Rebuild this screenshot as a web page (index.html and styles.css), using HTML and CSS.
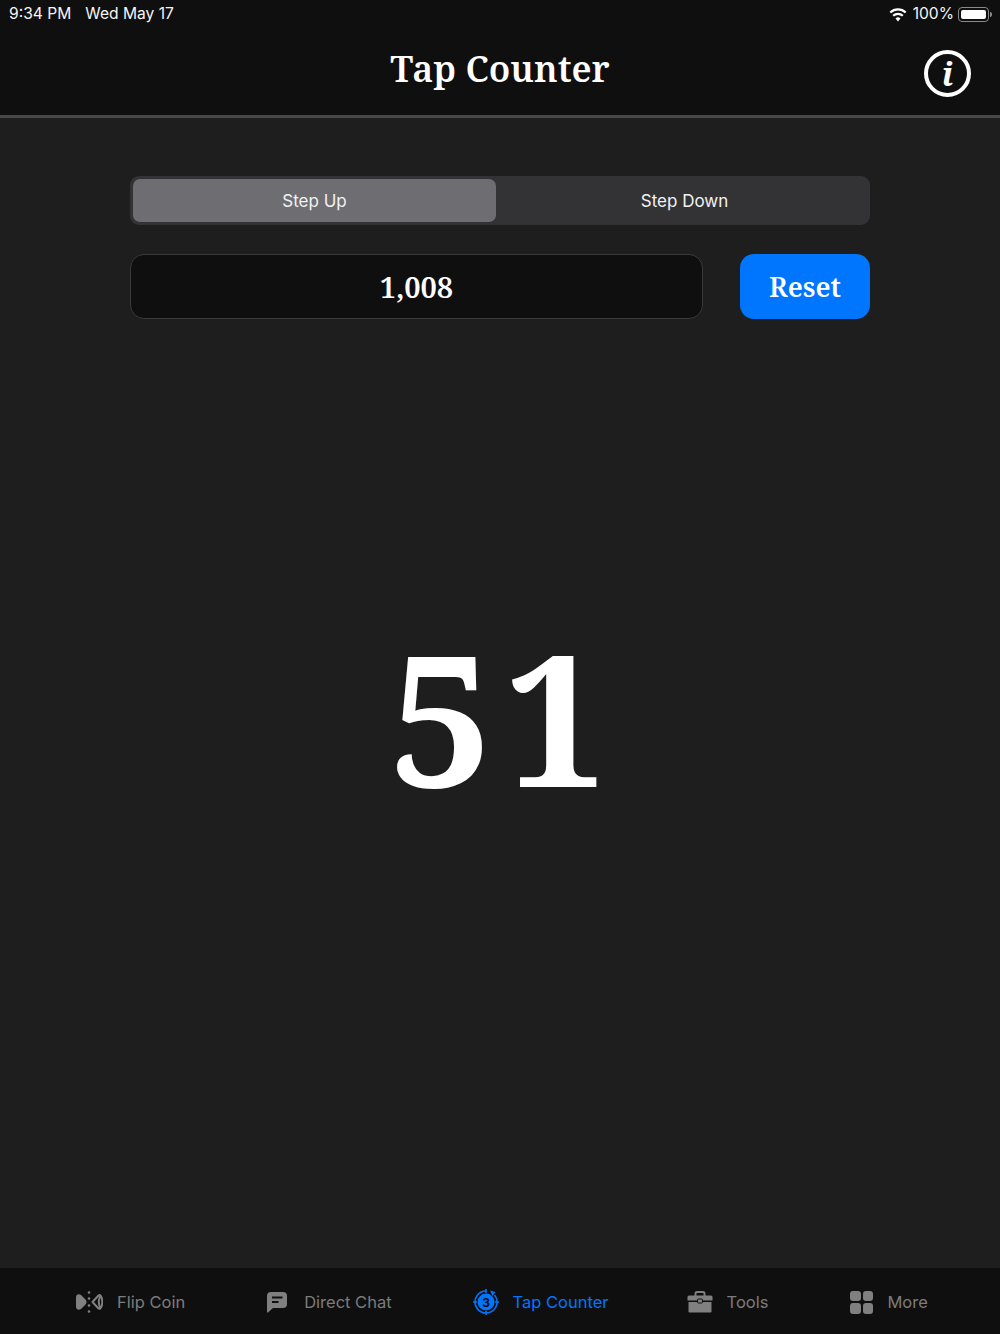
FILE: index.html
```html
<!DOCTYPE html>
<html lang="en">
<head>
    <meta charset="UTF-8">
    <meta name="viewport" content="width=device-width, initial-scale=1.0">
    <title>Tap Counter</title>
    <link rel="stylesheet" href="styles.css">
</head>
<body>
    <header class="top-bar">
        <div class="status-bar">
            <div class="status-left">
                <span>9:34 PM</span>
                <span>Wed May 17</span>
            </div>
            <div class="status-right">
                <svg class="wifi" viewBox="0 0 20 15" width="20" height="15">
                    <path d="M10 14.500l-2.500-3a3.600 3.600 0 0 1 5 0z" fill="#fff"/>
                    <path d="M5.200 8.700a7 7 0 0 1 9.600 0M2.300 5.500a11 11 0 0 1 15.400 0" fill="none" stroke="#fff" stroke-width="2.200"/>
                </svg>
                <span>100%</span>
                <div class="battery"><div class="battery-fill"></div></div>
                <div class="battery-tip"></div>
            </div>
        </div>
        <div class="title-row">
            <h1>Tap Counter</h1>
            <button class="info-btn">i</button>
        </div>
    </header>

    <main class="content">
        <div class="segmented">
            <div class="segment active">Step Up</div>
            <div class="segment second">Step Down</div>
        </div>
        <div class="step-row">
            <div class="step-value">1,008</div>
            <button class="reset-btn">Reset</button>
        </div>
        <div class="count">51</div>
    </main>

    <nav class="tab-bar">
        <div class="tab tab-flip">
            <svg viewBox="0 0 28 24" width="28" height="24">
                <path d="M1 7.500C1 4 4 3.500 6 5l4.500 4.500c1.400 1.400 1.400 3.600 0 5L6 19c-2 1.500-5 1-5-2.500z" fill="#808080"/>
                <circle cx="14" cy="2.500" r="1.300" fill="#808080"/>
                <circle cx="14" cy="8.500" r="1.300" fill="#808080"/>
                <circle cx="14" cy="15.500" r="1.300" fill="#808080"/>
                <circle cx="14" cy="21.500" r="1.300" fill="#808080"/>
                <path d="M23.500 5.500 17.500 12l6 6.500c1.500 1 2-.5 1.500-1.500-.8-1.500-1.200-3-1.200-5s.4-3.500 1.200-5c.5-1-0-2.500-1.500-1.500z" fill="none" stroke="#808080" stroke-width="2" stroke-linejoin="round"/>
                <path d="M24.500 5c2 1 2.800 4 2.800 7s-.8 6-2.800 7" fill="none" stroke="#808080" stroke-width="2"/>
            </svg>
            <span>Flip Coin</span>
        </div>
        <div class="tab tab-chat">
            <svg viewBox="0 0 22 22" width="22" height="22">
                <path d="M5 1h12a4 4 0 0 1 4 4v8a4 4 0 0 1-4 4H7l-5 4.500c-.5.300-1 0-1-.5V5a4 4 0 0 1 4-4z" fill="#808080"/>
                <path d="M6 6.500h10.500M6 11h6.500" stroke="#0f0f0f" stroke-width="2.200"/>
            </svg>
            <span>Direct Chat</span>
        </div>
        <div class="tab tab-counter active">
            <svg viewBox="0 0 26 26" width="26" height="26">
                <path d="M13 2a11 11 0 1 0 8.500 4" fill="none" stroke="#0076ff" stroke-width="1.600"/>
                <path d="M17 1.500l2.500 5.500 3-4z" fill="#0076ff"/>
                <circle cx="13" cy="13" r="8.500" fill="#0076ff"/>
                <path d="M13 0v4M13 22v4M0 13h4M22 13h4" stroke="#0076ff" stroke-width="1.600"/>
                <text x="13" y="17.500" class="tab-badge">3</text>
            </svg>
            <span>Tap Counter</span>
        </div>
        <div class="tab tab-tools">
            <svg viewBox="0 0 26 22" width="26" height="22">
                <path d="M8.500 5V2.500A1.500 1.500 0 0 1 10 1h6a1.500 1.500 0 0 1 1.500 1.500V5" fill="none" stroke="#808080" stroke-width="2"/>
                <path d="M2 4.500h22a1.500 1.500 0 0 1 1.500 1.500v3.500H.5V6A1.500 1.500 0 0 1 2 4.500z" fill="#808080"/>
                <path d="M1.500 11h23v9.500a1 1 0 0 1-1 1h-21a1 1 0 0 1-1-1z" fill="#808080"/>
                <rect x="10.500" y="8" width="5" height="4" rx="1" fill="#808080" stroke="#0f0f0f" stroke-width="1"/>
            </svg>
            <span>Tools</span>
        </div>
        <div class="tab tab-more">
            <div class="grid-icon">
                <i></i><i></i><i></i><i></i>
            </div>
            <span>More</span>
        </div>
    </nav>
</body>
</html>
```
FILE: styles.css
```css
* {
    margin: 0;
    padding: 0;
    box-sizing: border-box;
}

body {
    width: 1000px;
    height: 1334px;
    overflow: hidden;
    display: flex;
    flex-direction: column;
    background: #1e1e1e;
    color: #fff;
    font-family: Inter, 'Liberation Sans', sans-serif;
}

/* Barra superior */
.top-bar {
    height: 118px;
    background: #0f0f0f;
    border-bottom: 3px solid #48484a;
}

.status-bar {
    height: 26px;
    padding: 5px 8px 0 9px;
    display: flex;
    justify-content: space-between;
    font-size: 15.6px;
    line-height: 18px;
    color: #f5f5f5;
}

.status-left {
    display: flex;
    gap: 14px;
}

.status-right {
    display: flex;
    align-items: center;
    height: 18px;
}

.wifi {
    margin-right: 5px;
}

.battery {
    width: 31px;
    height: 15px;
    margin-left: 4px;
    padding: 2px;
    border: 1px solid #8a8a8a;
    border-radius: 4px;
}

.battery-fill {
    height: 100%;
    background: #fff;
    border-radius: 2px;
}

.battery-tip {
    width: 2px;
    height: 5px;
    margin-left: 1px;
    background: #8a8a8a;
    border-radius: 0 2px 2px 0;
}

.title-row {
    position: relative;
    height: 88px;
    display: flex;
    justify-content: center;
}

h1 {
    font-family: 'Noto Serif', 'DejaVu Serif', 'Liberation Serif', serif;
    font-size: 36px;
    font-weight: 600;
    line-height: 44px;
    margin-top: 21px;
}

.info-btn {
    position: absolute;
    top: 24px;
    right: 29px;
    width: 47px;
    height: 47px;
    border: 4px solid #fff;
    border-radius: 50%;
    background: none;
    color: #fff;
    font-family: 'Noto Serif', 'Liberation Serif', serif;
    font-style: italic;
    font-weight: 700;
    font-size: 32px;
    line-height: 38px;
}

/* Contenido */
.content {
    flex: 1;
    padding: 58px 130px 0;
    display: flex;
    flex-direction: column;
}

.segmented {
    height: 49px;
    padding: 3px;
    display: flex;
    background: #333336;
    border-radius: 9px;
}

.segment {
    display: flex;
    align-items: center;
    justify-content: center;
    font-size: 17px;
    border-radius: 7px;
    color: #f2f2f2;
}

.segment.active {
    width: 363px;
    background: #6d6d72;
}

.segment.second {
    flex: 1;
    padding-left: 6px;
}

.step-row {
    margin-top: 29px;
    display: flex;
    gap: 37px;
}

.step-value {
    flex: 1;
    height: 65px;
    display: flex;
    align-items: center;
    justify-content: center;
    background: #0f0f0f;
    border: 1px solid #3a3a3c;
    border-radius: 14px;
    font-family: 'Noto Serif', 'Liberation Serif', serif;
    font-weight: 600;
    font-size: 29px;
}

.reset-btn {
    width: 130px;
    height: 65px;
    border: none;
    border-radius: 14px;
    background: #0076ff;
    color: #fff;
    font-family: 'Noto Serif', 'Liberation Serif', serif;
    font-weight: 600;
    font-size: 27px;
}

.count {
    flex: 1;
    display: flex;
    align-items: center;
    justify-content: center;
    font-family: 'Noto Serif', 'Liberation Serif', serif;
    font-weight: 700;
    font-size: 182px;
    letter-spacing: 12px;
    padding: 0 0 155px 8px;
}

/* Barra de pestañas */
.tab-bar {
    height: 66px;
    background: #0f0f0f;
    display: flex;
    align-items: center;
    padding: 2px 0 0 75px;
}

.tab {
    display: flex;
    align-items: center;
    font-size: 16.5px;
    color: #7c7c7c;
}

.tab.active {
    color: #0076ff;
}

.tab-flip { gap: 14px; }
.tab-chat { gap: 16px; margin-left: 81px; }
.tab-counter { gap: 14px; margin-left: 81px; }
.tab-tools { gap: 14px; margin-left: 78px; }
.tab-more { gap: 14px; margin-left: 82px; }

.tab-badge {
    font-family: Inter, sans-serif;
    font-size: 12px;
    font-weight: 700;
    fill: #0f0f0f;
    text-anchor: middle;
}

.grid-icon {
    width: 23px;
    height: 23px;
    display: grid;
    grid-template-columns: 1fr 1fr;
    gap: 2px;
}

.grid-icon i {
    background: #808080;
    border-radius: 3px;
}
```
